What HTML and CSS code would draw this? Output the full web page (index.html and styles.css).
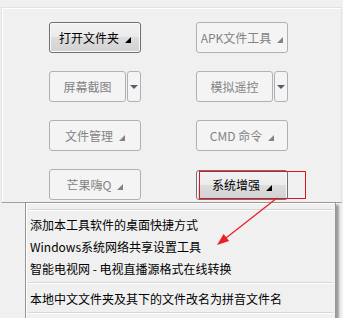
FILE: index.html
```html
<!DOCTYPE html>
<html>
<head>
<meta charset="utf-8">
<link rel="stylesheet" href="styles.css">
</head>
<body>
<div class="panel">
  <div class="grid">
    <div class="btn primary"><span>打开文件夹</span><i class="tri"></i></div>
    <div class="btn disabled"><span>APK文件工具</span><i class="tri"></i></div>
    <div class="split">
      <div class="btn disabled main"><span>屏幕截图</span></div>
      <div class="btn disabled drop"><i class="down"></i></div>
    </div>
    <div class="split">
      <div class="btn disabled main"><span>模拟遥控</span></div>
      <div class="btn disabled drop"><i class="down"></i></div>
    </div>
    <div class="btn disabled"><span>文件管理</span><i class="tri"></i></div>
    <div class="btn disabled"><span>CMD 命令</span><i class="tri"></i></div>
    <div class="btn disabled"><span>芒果嗨Q</span><i class="tri"></i></div>
    <div class="btn primary pressed"><span>系统增强</span><i class="tri"></i></div>
  </div>
</div>

<div class="menu">
  <div class="sep top"></div>
  <div class="item">添加本工具软件的桌面快捷方式</div>
  <div class="item">Windows系统网络共享设置工具</div>
  <div class="item">智能电视网 - 电视直播源格式在线转换</div>
  <div class="sep"></div>
  <div class="item">本地中文文件夹及其下的文件改名为拼音文件名</div>
  <div class="sep"></div>
</div>

<div class="redbox"></div>
<svg class="arrow" width="343" height="318" viewBox="0 0 343 318">
  <line x1="277" y1="198" x2="226" y2="238" stroke="#e8202a" stroke-width="1.3"/>
  <polygon points="217,245 229.2,241.1 223.6,234.1" fill="#e8202a"/>
</svg>
</body>
</html>
```

FILE: styles.css
```css
html, body {
  margin: 0;
  padding: 0;
  background: #f0f0f0;
  width: 343px;
  height: 318px;
  overflow: hidden;
  font-family: "Noto Sans CJK SC", "Microsoft YaHei", sans-serif;
  font-size: 12px;
}

.panel {
  margin: 7px 0 0 1px;
  width: 341px;
  height: 196px;
  box-sizing: border-box;
  border-top: 1px solid #dbe4ec;
  border-left: 1px solid #dbe4ec;
  border-right: 1px solid #dbe4ec;
  border-bottom: 1px solid #a0a0a0;
  box-shadow: inset 1px 1px 0 #ffffff;
  padding: 14px 0 0 47px;
}

.grid {
  display: grid;
  grid-template-columns: 92px 92px;
  grid-template-rows: 31px 31px 31px 31px;
  column-gap: 55px;
  row-gap: 18px;
}

.btn {
  box-sizing: border-box;
  height: 31px;
  border-radius: 3px;
  display: flex;
  align-items: center;
  justify-content: center;
  gap: 6px;
  line-height: 1;
}

.btn span {
  display: block;
}

.primary {
  border: 1px solid #707070;
  background: linear-gradient(#f2f2f2 0%, #ebebeb 50%, #dddddd 50%, #d2d2d2 100%);
  box-shadow: inset 0 0 0 1px #fafafa;
  color: #000;
}

.pressed {
  height: 30px;
  margin-top: 1px;
}

.disabled {
  border: 1px solid #adb2b5;
  background: #f4f4f4;
  color: #838383;
}

.tri {
  display: block;
  width: 0;
  height: 0;
  border-left: 6px solid transparent;
  border-bottom: 6px solid #000;
  margin-top: 5px;
}

.disabled .tri {
  border-bottom-color: #838383;
}

.split {
  display: flex;
  gap: 1px;
}

.split .main {
  width: 78px;
}

.split .drop {
  width: 14px;
}

.down {
  display: block;
  width: 0;
  height: 0;
  border-left: 4px solid transparent;
  border-right: 4px solid transparent;
  border-top: 4px solid #5a5a6a;
}

.menu {
  position: absolute;
  left: 25px;
  top: 202px;
  width: 311px;
  height: 130px;
  box-sizing: border-box;
  border: 1px solid #979797;
  background: #f0f0f0;
  box-shadow: inset 1px 1px 0 #ffffff, 3px 3px 2px rgba(0, 0, 0, 0.35);
  padding: 6px 2px 0 2px;
}

.item {
  height: 22px;
  line-height: 22px;
  padding-left: 2px;
  color: #000;
  white-space: nowrap;
}

.sep {
  height: 0;
  border-top: 1px solid #d7d7d7;
  border-bottom: 1px solid #ffffff;
  margin: 2px 0 4px 0;
}

.sep.top {
  margin: 0 0 3px 0;
}

.redbox {
  position: absolute;
  left: 199px;
  top: 171px;
  width: 107px;
  height: 28px;
  box-sizing: border-box;
  border: 1px solid #e0141e;
}

.arrow {
  position: absolute;
  left: 0;
  top: 0;
}
```
